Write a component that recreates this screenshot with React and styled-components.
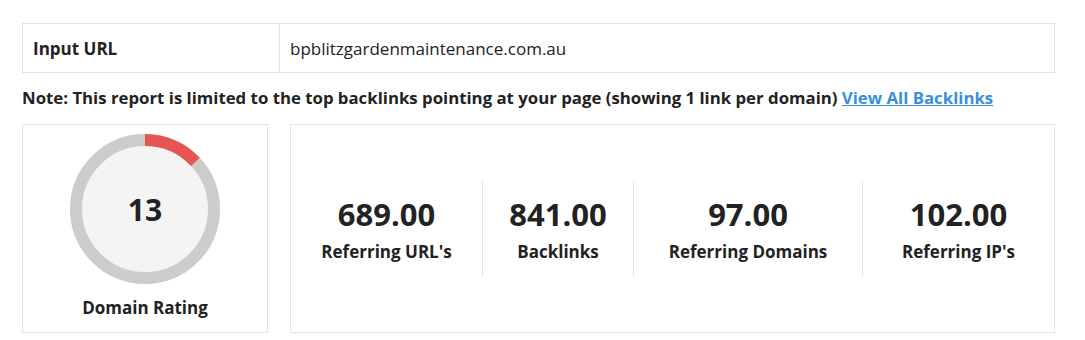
import React from 'react';
import styled, { createGlobalStyle } from 'styled-components';

const GlobalStyle = createGlobalStyle`
	body {
		margin: 0;
		background: #fff;
		font-family: 'Open Sans', 'Noto Sans', sans-serif;
		color: #222;
	}
`;

const stats = [
	{ value: '689.00', label: "Referring URL's" },
	{ value: '841.00', label: 'Backlinks' },
	{ value: '97.00', label: 'Referring Domains' },
	{ value: '102.00', label: "Referring IP's" },
];

const Donut = ({ value = 13, size = 150, stroke = 12 }) => {
	const r = (size - stroke) / 2;
	const c = 2 * Math.PI * r;
	const dash = (value / 100) * c;
	return (
		<svg width={size} height={size} viewBox={`0 0 ${size} ${size}`}>
			<circle cx={size / 2} cy={size / 2} r={r} fill="#f4f4f4" stroke="#cccccc" strokeWidth={stroke} />
			<circle
				cx={size / 2}
				cy={size / 2}
				r={r}
				fill="none"
				stroke="#e85353"
				strokeWidth={stroke}
				strokeDasharray={`${dash} ${c}`}
				transform={`rotate(-90 ${size / 2} ${size / 2})`}
			/>
		</svg>
	);
};

const App = () => {
	return (
		<Page>
			<GlobalStyle />
			<UrlTable>
				<LabelCell>Input URL</LabelCell>
				<ValueCell>bpblitzgardenmaintenance.com.au</ValueCell>
			</UrlTable>

			<Note>
				Note: This report is limited to the top backlinks pointing at your page (showing 1 link per domain){' '}
				<a href="#">View All Backlinks</a>
			</Note>

			<Cards>
				<RatingCard>
					<DonutWrap>
						<Donut value={13} />
						<DonutValue>13</DonutValue>
					</DonutWrap>
					<RatingLabel>Domain Rating</RatingLabel>
				</RatingCard>

				<StatsCard>
					{stats.map((s) => (
						<Stat key={s.label}>
							<StatValue>{s.value}</StatValue>
							<StatLabel>{s.label}</StatLabel>
						</Stat>
					))}
				</StatsCard>
			</Cards>
		</Page>
	);
};

const Page = styled.div`
	padding: 23px 30px 0 22px;
`;

const UrlTable = styled.div`
	display: grid;
	grid-template-columns: 257px 1fr;
	border: 1px solid #e4e4e4;
	height: 50px;
	box-sizing: border-box;
	font-size: 17px;
`;

const LabelCell = styled.div`
	display: flex;
	align-items: center;
	padding-left: 10px;
	font-weight: 700;
	border-right: 1px solid #e4e4e4;
`;

const ValueCell = styled.div`
	display: flex;
	align-items: center;
	padding-left: 10px;
`;

const Note = styled.div`
	margin-top: 14px;
	line-height: 22px;
	font-size: 16.8px;
	font-weight: 700;
	white-space: nowrap;

	a {
		color: #3a8edb;
		text-decoration: underline;
	}
`;

const Cards = styled.div`
	display: flex;
	gap: 22px;
	margin-top: 15px;
	height: 209px;
`;

const Card = styled.div`
	border: 1px solid #e2e2e8;
	box-sizing: border-box;
	background: #fff;
`;

const RatingCard = styled(Card)`
	width: 246px;
	display: flex;
	flex-direction: column;
	align-items: center;
	padding-top: 9px;
`;

const DonutWrap = styled.div`
	position: relative;
	width: 150px;
	height: 150px;
`;

const DonutValue = styled.div`
	position: absolute;
	inset: 0;
	display: flex;
	align-items: center;
	justify-content: center;
	font-size: 30px;
	font-weight: 700;
`;

const RatingLabel = styled.div`
	margin-top: 12px;
	font-size: 17px;
	font-weight: 700;
`;

const StatsCard = styled(Card)`
	flex: 1;
	display: grid;
	grid-template-columns: 191px 151px 229px 1fr;
	align-items: center;
`;

const Stat = styled.div`
	text-align: center;
	height: 96px;
	box-sizing: border-box;
	padding-top: 14px;

	& + & {
		border-left: 1px solid #e4e4e4;
	}
`;

const StatValue = styled.div`
	font-size: 31px;
	font-weight: 700;
	line-height: 38px;
`;

const StatLabel = styled.div`
	font-size: 17px;
	font-weight: 700;
	line-height: 24px;
	margin-top: 7px;
`;

export default App;
